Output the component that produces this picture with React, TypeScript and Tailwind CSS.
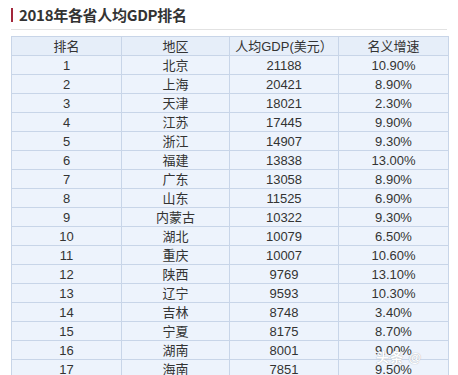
import React from "react";

const rows: [string, string, string, string][] = [
  ["1", "北京", "21188", "10.90%"],
  ["2", "上海", "20421", "8.90%"],
  ["3", "天津", "18021", "2.30%"],
  ["4", "江苏", "17445", "9.90%"],
  ["5", "浙江", "14907", "9.30%"],
  ["6", "福建", "13838", "13.00%"],
  ["7", "广东", "13058", "8.90%"],
  ["8", "山东", "11525", "6.90%"],
  ["9", "内蒙古", "10322", "9.30%"],
  ["10", "湖北", "10079", "6.50%"],
  ["11", "重庆", "10007", "10.60%"],
  ["12", "陕西", "9769", "13.10%"],
  ["13", "辽宁", "9593", "10.30%"],
  ["14", "吉林", "8748", "3.40%"],
  ["15", "宁夏", "8175", "8.70%"],
  ["16", "湖南", "8001", "9.00%"],
  ["17", "海南", "7851", "9.50%"],
];

const header = ["排名", "地区", "人均GDP(美元）", "名义增速"];

const Row: React.FC<{ cells: string[]; head?: boolean }> = ({ cells, head }) => (
  <div className="grid grid-cols-[110px_108px_109px_110px]">
    {cells.map((c, i) => (
      <div
        key={i}
        className={`h-[19px] flex items-center justify-center border-r border-b border-[#c8d5e8] text-[13px] leading-none text-[#333] ${
          head ? "bg-[#e6eef9]" : "bg-[#edf3fc]"
        }`}
      >
        {c}
      </div>
    ))}
  </div>
);

export default function App() {
  return (
    <div
      className="relative w-[458px] h-[375px] overflow-hidden bg-white px-[11px]"
      style={{ fontFamily: '"Liberation Sans", "Noto Sans CJK SC", sans-serif' }}
    >
      {/* 标题 */}
      <div className="flex items-center h-[30px] border-b border-[#e2e2e2] pb-[1px]">
        <span className="w-[2px] h-[14px] bg-[#a3273b] mt-[1px]" />
        <h1
          className="ml-[6px] text-[15px] font-bold leading-none text-[#333] tracking-[-0.3px]"
          style={{ fontFamily: '"Noto Sans CJK SC", sans-serif' }}
        >
          2018年各省人均GDP排名
        </h1>
      </div>

      {/* 表格 */}
      <div className="mt-[6px] w-[438px] border-t border-l border-[#c8d5e8]">
        <Row cells={header} head />
        {rows.map((r) => (
          <Row key={r[0]} cells={r} />
        ))}
      </div>

      {/* 水印 */}
      <div
        className="absolute left-[376px] top-[351px] text-[13px] font-bold leading-none text-white tracking-[1px]"
        style={{ textShadow: "0 0 1px #b8bec6, 0 0 1px #b8bec6" }}
      >
        头条 @
      </div>
    </div>
  );
}
